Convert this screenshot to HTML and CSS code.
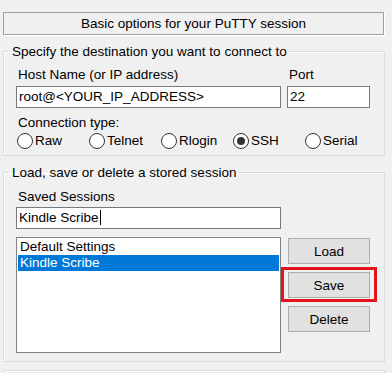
FILE: index.html
```html
<!DOCTYPE html>
<html lang="en">
<head>
    <meta charset="UTF-8">
    <meta name="viewport" content="width=device-width, initial-scale=1.0">
    <title>PuTTY Configuration</title>
    <link rel="stylesheet" href="styles.css">
</head>
<body>
    <div class="panel">
      <div class="header">Basic options for your PuTTY session</div>

      <fieldset class="group">
        <legend>Specify the destination you want to connect to</legend>
        <div class="host-row">
          <div class="host-col">
            <label class="lbl">Host Name (or IP address)</label>
            <div class="field host">root@&lt;YOUR_IP_ADDRESS&gt;</div>
          </div>
          <div class="port-col">
            <label class="lbl">Port</label>
            <div class="field port">22</div>
          </div>
        </div>
        <div class="lbl conn">Connection type:</div>
        <div class="radios">
          <div class="radio"><span class="dot"></span>Raw</div>
          <div class="radio"><span class="dot"></span>Telnet</div>
          <div class="radio"><span class="dot"></span>Rlogin</div>
          <div class="radio"><span class="dot on"></span>SSH</div>
          <div class="radio"><span class="dot"></span>Serial</div>
        </div>
      </fieldset>

      <fieldset class="group sessions">
        <legend>Load, save or delete a stored session</legend>
        <div class="lbl">Saved Sessions</div>
        <div class="field saved"><span class="caret">Kindle Scribe</span></div>
        <div class="session-row">
          <ul class="list">
            <li>Default Settings</li>
            <li class="sel">Kindle Scribe</li>
          </ul>
          <div class="buttons">
            <button type="button">Load</button>
            <span class="marked"><button type="button">Save</button></span>
            <button type="button">Delete</button>
          </div>
        </div>
      </fieldset>

      <div class="group next"></div>
    </div>
</body>
</html>
```

FILE: styles.css
```css
body { margin: 0; background: #f0f0f0; font-family: "Liberation Sans", Arial, sans-serif; font-size: 13.5px; color: #000; overflow: hidden; }
.panel { padding: 12px 0 0 3px; width: 382px; }
.header { width: 379px; height: 21px; line-height: 21px; text-align: center; border: 1px solid #a0a0a0; box-shadow: 1px 1px 0 #fff; }

.group { margin: 8px 0 0 0; padding: 6px 13px 5px 12px; border: 1px solid #dcdcdc; box-shadow: inset 1px 1px 0 #fff; min-width: 0; }
.group legend { margin-left: -6px; padding: 0 2px; line-height: 17px; height: 17px; }
.sessions { padding-top: 7px; padding-bottom: 8px; }
.next { height: 20px; }

.lbl { display: block; line-height: 17px; height: 17px; padding-left: 2px; }
.host-row { display: flex; gap: 6px; }
.host-col { width: 265px; }
.port-col { width: 83px; }
.field { margin-top: 3px; height: 20px; line-height: 20px; background: #fff; border: 1px solid #7a7a7a; padding-left: 2px; white-space: nowrap; }
.conn { margin-top: 6px; }

.radios { display: grid; grid-template-columns: 72px 72px 72px 72px auto; margin: 1px 0 0 1px; height: 18px; }
.radio { display: flex; align-items: center; gap: 2px; line-height: 18px; }
.dot { width: 14px; height: 14px; border: 1px solid #333; border-radius: 50%; background: #fff; display: flex; align-items: center; justify-content: center; }
.dot.on::after { content: ""; width: 8px; height: 8px; border-radius: 50%; background: #333; }

.saved { width: 261px; margin-top: 2px; }
.caret { border-right: 1px solid #000; padding-right: 1px; }

.session-row { display: flex; gap: 7px; margin-top: 8px; }
.list { list-style: none; margin: 0; padding: 1px; width: 261px; height: 112px; background: #fff; border: 1px solid #828282; }
.list li { height: 16px; line-height: 16px; padding-left: 2px; }
.list li.sel { background: #0078d7; color: #fff; }

.buttons { display: flex; flex-direction: column; gap: 8px; margin-top: 1px; width: 82px; }
.buttons button { width: 82px; height: 26px; background: #e1e1e1; border: 1px solid #adadad; font: inherit; color: #000; padding: 0; }
.marked { position: relative; display: block; height: 26px; }
.marked::after { content: ""; position: absolute; top: -5px; bottom: -4px; left: -7px; right: -7px; border: 3px solid #e3141b; }
```
